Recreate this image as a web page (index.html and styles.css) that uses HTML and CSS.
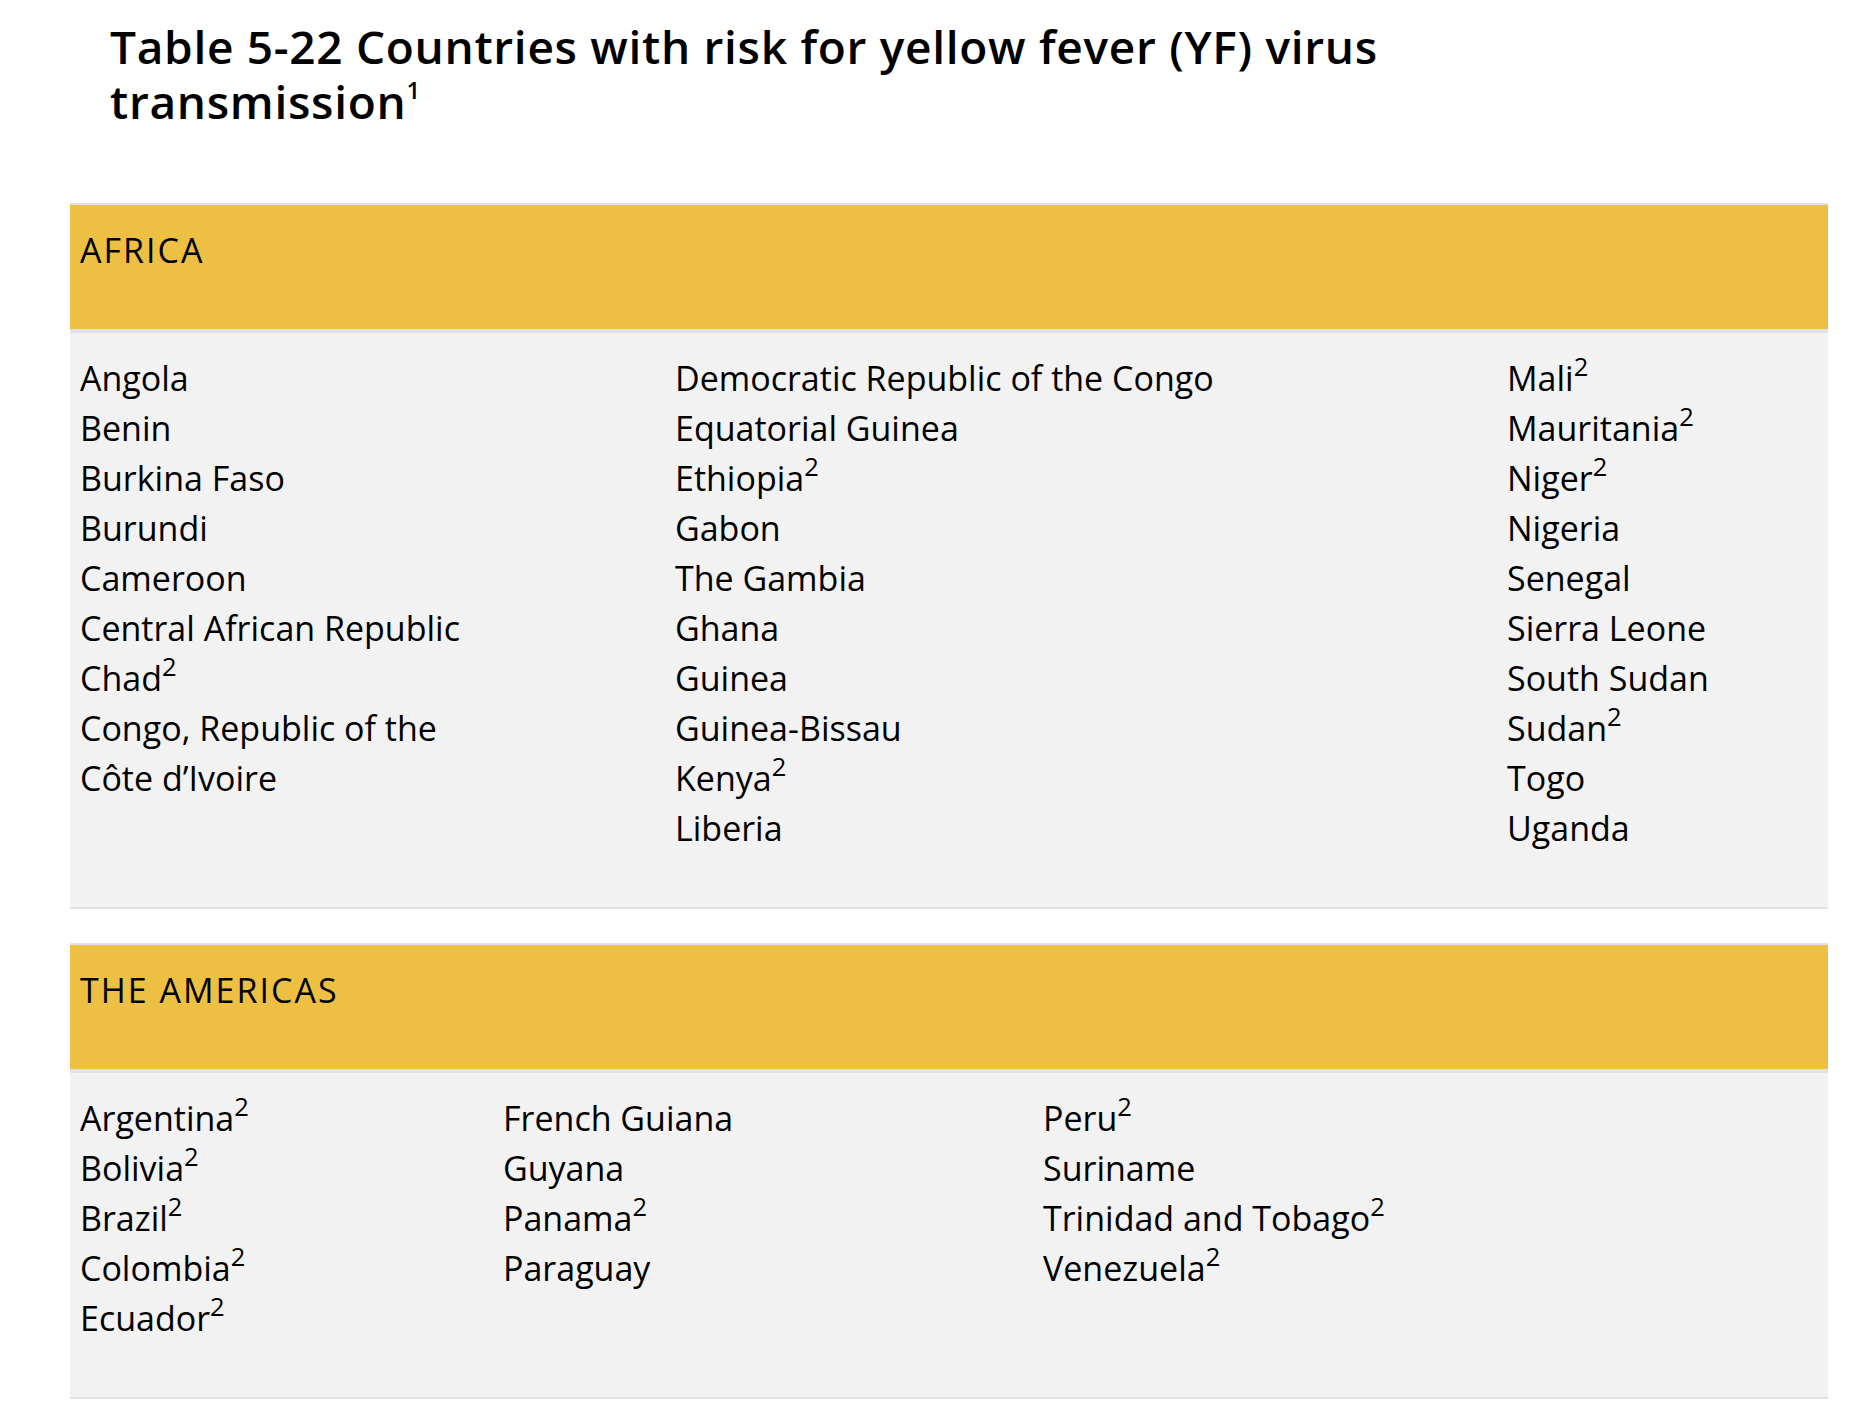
FILE: index.html
```html
<!DOCTYPE html>
<html lang="en">
<head>
<meta charset="utf-8">
<title>Table 5-22 Countries with risk for yellow fever (YF) virus transmission</title>
<link rel="stylesheet" href="styles.css">
</head>
<body>
<main class="page">
  <h1 class="title">Table 5-22 Countries with risk for yellow fever (YF) virus transmission<sup class="title-note">1</sup></h1>

  <section class="region">
    <div class="region-head">AFRICA</div>
    <div class="region-body africa">
      <ul class="col">
        <li>Angola</li>
        <li>Benin</li>
        <li>Burkina Faso</li>
        <li>Burundi</li>
        <li>Cameroon</li>
        <li>Central African Republic</li>
        <li>Chad<sup class="note">2</sup></li>
        <li>Congo, Republic of the</li>
        <li>Côte d’Ivoire</li>
      </ul>
      <ul class="col">
        <li>Democratic Republic of the Congo</li>
        <li>Equatorial Guinea</li>
        <li>Ethiopia<sup class="note">2</sup></li>
        <li>Gabon</li>
        <li>The Gambia</li>
        <li>Ghana</li>
        <li>Guinea</li>
        <li>Guinea-Bissau</li>
        <li>Kenya<sup class="note">2</sup></li>
        <li>Liberia</li>
      </ul>
      <ul class="col">
        <li>Mali<sup class="note">2</sup></li>
        <li>Mauritania<sup class="note">2</sup></li>
        <li>Niger<sup class="note">2</sup></li>
        <li>Nigeria</li>
        <li>Senegal</li>
        <li>Sierra Leone</li>
        <li>South Sudan</li>
        <li>Sudan<sup class="note">2</sup></li>
        <li>Togo</li>
        <li>Uganda</li>
      </ul>
    </div>
  </section>

  <section class="region">
    <div class="region-head">THE AMERICAS</div>
    <div class="region-body americas">
      <ul class="col">
        <li>Argentina<sup class="note">2</sup></li>
        <li>Bolivia<sup class="note">2</sup></li>
        <li>Brazil<sup class="note">2</sup></li>
        <li>Colombia<sup class="note">2</sup></li>
        <li>Ecuador<sup class="note">2</sup></li>
      </ul>
      <ul class="col">
        <li>French Guiana</li>
        <li>Guyana</li>
        <li>Panama<sup class="note">2</sup></li>
        <li>Paraguay</li>
      </ul>
      <ul class="col">
        <li>Peru<sup class="note">2</sup></li>
        <li>Suriname</li>
        <li>Trinidad and Tobago<sup class="note">2</sup></li>
        <li>Venezuela<sup class="note">2</sup></li>
      </ul>
    </div>
  </section>
</main>
</body>
</html>
```

FILE: styles.css
```css
html, body {
  margin: 0;
  padding: 0;
  background: #ffffff;
}

body {
  font-family: "Open Sans", "Noto Sans", "Liberation Sans", sans-serif;
  color: #000000;
}

.page {
  width: 1758px;
  margin-left: 70px;
  padding-top: 19px;
  padding-bottom: 27px;
}

.title {
  margin: 0 0 74px 0;
  padding-left: 40px;
  width: 1400px;
  font-size: 46px;
  font-weight: 600;
  line-height: 55px;
  letter-spacing: 0.7px;
}

.title-note {
  font-size: 24px;
  line-height: 0;
  vertical-align: 20px;
  font-weight: 600;
  letter-spacing: 0;
}

.region {
  border-top: 2px solid #dfe2e7;
  border-bottom: 2px solid #dfe2e7;
  margin-bottom: 34px;
}

.region-head {
  background: #edc043;
  border-bottom: 4px solid #dfe2e7;
  padding: 20px 10px 54px 10px;
  font-size: 34px;
  line-height: 50px;
  letter-spacing: 2px;
}

.region-body {
  background: #f2f2f2;
  display: grid;
  padding: 20px 10px 54px 10px;
  font-size: 34px;
  line-height: 50px;
}

.africa {
  grid-template-columns: 595px 832px 1fr;
}

.americas {
  grid-template-columns: 423px 540px 1fr;
}

.col {
  list-style: none;
  margin: 0;
  padding: 0;
}

.col li {
  margin: 0;
  padding: 0;
}

.note {
  font-size: 25.5px;
  line-height: 0;
  vertical-align: 15.5px;
}
```
